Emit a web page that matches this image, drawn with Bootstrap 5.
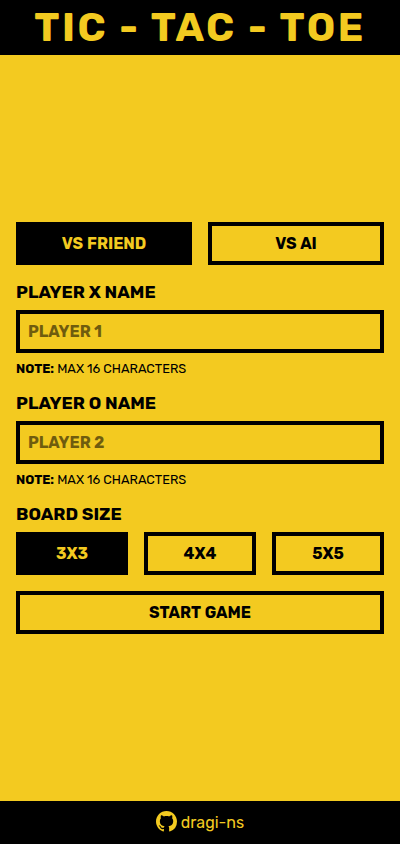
<!DOCTYPE html>
<html lang="en">
<head>
<meta charset="utf-8">
<meta name="viewport" content="width=device-width, initial-scale=1">
<title>Tic - Tac - Toe</title>
<link href="https://cdn.jsdelivr.net/npm/bootstrap@5.3.0/dist/css/bootstrap.min.css" rel="stylesheet">
<style>
:root { --sun: #f3ca20; }
body { background: var(--sun); color: #000; font-family: Rubik, Roboto, "Liberation Sans", sans-serif; }
.bar { background: #000; color: var(--sun); }
.site-title { font-size: 40px; line-height: 47px; font-weight: 700; letter-spacing: 2.5px; white-space: pre; }
.game-btn { height: 43px; border: 4px solid #000; border-radius: 0; padding: 0; color: #000; font-weight: 700; font-size: 16px; line-height: 35px; word-spacing: .6px; }
.game-btn.active, .game-btn:hover { background: #000 !important; color: var(--sun) !important; border-color: #000 !important; }
.field-label { font-size: 17.6px; line-height: 23px; margin-bottom: -2px; font-weight: 700; }
.game-input { height: 43px; border: 4px solid #000; border-radius: 0; padding: 0 8px; background: transparent; font-weight: 700; font-size: 16px; }
.game-input::placeholder { color: #000; opacity: .54; }
.field-note { font-size: 12.8px; line-height: 15px; letter-spacing: -.02px; }
.site-footer { height: 43px; }
.profile { color: var(--sun); font-size: 16px; line-height: 19px; gap: 4px; }
.profile svg { margin-top: 2px; }
</style>
</head>
<body>
<div class="d-flex flex-column vh-100">
  <header class="bar text-center py-1"><h1 class="site-title m-0">TIC - TAC - TOE</h1></header>
  <main class="flex-grow-1 d-flex flex-column justify-content-center px-3">
    <form class="d-flex flex-column gap-3">
      <div class="d-flex gap-3">
        <button type="button" class="btn game-btn active flex-fill w-50">VS FRIEND</button>
        <button type="button" class="btn game-btn flex-fill w-50">VS AI</button>
      </div>
      <div class="d-flex flex-column gap-2">
        <label class="field-label" for="px">PLAYER X NAME</label>
        <input class="form-control game-input" id="px" placeholder="PLAYER 1" maxlength="16">
        <div class="field-note"><b>NOTE:</b> <span>MAX 16 CHARACTERS</span></div>
      </div>
      <div class="d-flex flex-column gap-2">
        <label class="field-label" for="po">PLAYER O NAME</label>
        <input class="form-control game-input" id="po" placeholder="PLAYER 2" maxlength="16">
        <div class="field-note"><b>NOTE:</b> <span>MAX 16 CHARACTERS</span></div>
      </div>
      <div class="d-flex flex-column gap-2">
        <div class="field-label">BOARD SIZE</div>
        <div class="d-flex gap-3">
          <button type="button" class="btn game-btn active w-100">3X3</button>
          <button type="button" class="btn game-btn w-100">4X4</button>
          <button type="button" class="btn game-btn w-100">5X5</button>
        </div>
      </div>
      <button type="button" class="btn game-btn w-100">START GAME</button>
    </form>
  </main>
  <footer class="bar site-footer d-flex justify-content-center align-items-start pt-2">
    <a class="profile d-flex align-items-start text-decoration-none" href="https://github.com/dragi-ns">
      <svg width="21" height="21" viewBox="0 0 16 16" fill="currentColor" aria-hidden="true"><path d="M8 0C3.58 0 0 3.58 0 8c0 3.54 2.29 6.53 5.47 7.59.4.07.55-.17.55-.38 0-.19-.01-.82-.01-1.49-2.01.37-2.53-.49-2.69-.94-.09-.23-.48-.94-.82-1.13-.28-.15-.68-.52-.01-.53.63-.01 1.08.58 1.23.82.72 1.21 1.87.87 2.33.66.07-.52.28-.87.51-1.07-1.78-.2-3.64-.89-3.64-3.95 0-.87.31-1.59.82-2.15-.08-.2-.36-1.02.08-2.12 0 0 .67-.21 2.2.82.64-.18 1.32-.27 2-.27s1.36.09 2 .27c1.53-1.04 2.2-.82 2.2-.82.44 1.1.16 1.92.08 2.12.51.56.82 1.27.82 2.15 0 3.07-1.87 3.75-3.65 3.95.29.25.54.73.54 1.48 0 1.07-.01 1.93-.01 2.2 0 .21.15.46.55.38A8.01 8.01 0 0 0 16 8c0-4.42-3.58-8-8-8z"/></svg>
      <span class="mt-1">dragi-ns</span>
    </a>
  </footer>
</div>
<script src="https://cdn.jsdelivr.net/npm/bootstrap@5.3.0/dist/js/bootstrap.bundle.min.js"></script>
</body>
</html>
